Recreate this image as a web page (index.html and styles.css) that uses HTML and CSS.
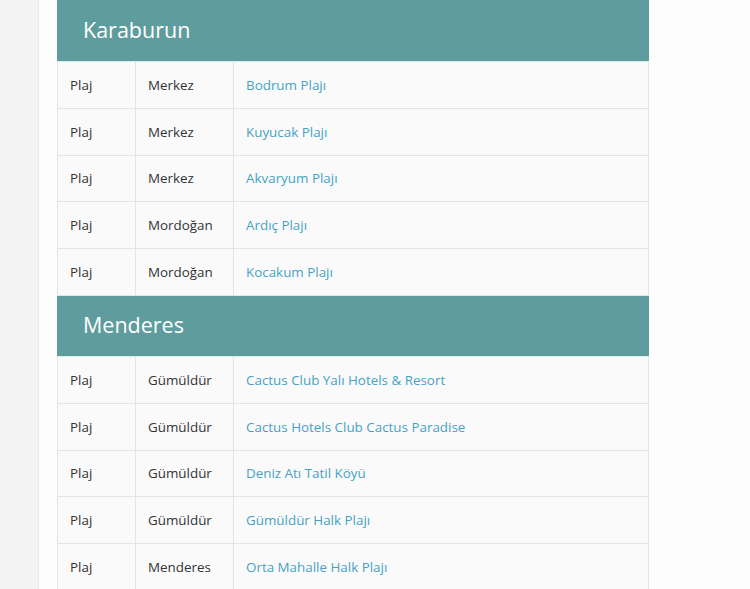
FILE: index.html
```html
<!DOCTYPE html>
<html lang="tr">
<head>
<meta charset="utf-8">
<title>Plajlar</title>
<link rel="stylesheet" href="styles.css">
</head>
<body>
<div class="page">
  <div class="gutter"></div>
  <main class="panel">
    <table class="list">
      <colgroup>
        <col class="col-type">
        <col class="col-area">
        <col class="col-name">
      </colgroup>
      <tbody>
        <tr class="group"><th colspan="3">Karaburun</th></tr>
        <tr><td>Plaj</td><td>Merkez</td><td><a href="#">Bodrum Plajı</a></td></tr>
        <tr><td>Plaj</td><td>Merkez</td><td><a href="#">Kuyucak Plajı</a></td></tr>
        <tr><td>Plaj</td><td>Merkez</td><td><a href="#">Akvaryum Plajı</a></td></tr>
        <tr><td>Plaj</td><td>Mordoğan</td><td><a href="#">Ardıç Plajı</a></td></tr>
        <tr><td>Plaj</td><td>Mordoğan</td><td><a href="#">Kocakum Plajı</a></td></tr>
        <tr class="group"><th colspan="3">Menderes</th></tr>
        <tr><td>Plaj</td><td>Gümüldür</td><td><a href="#">Cactus Club Yalı Hotels &amp; Resort</a></td></tr>
        <tr><td>Plaj</td><td>Gümüldür</td><td><a href="#">Cactus Hotels Club Cactus Paradise</a></td></tr>
        <tr><td>Plaj</td><td>Gümüldür</td><td><a href="#">Deniz Atı Tatil Köyü</a></td></tr>
        <tr><td>Plaj</td><td>Gümüldür</td><td><a href="#">Gümüldür Halk Plajı</a></td></tr>
        <tr><td>Plaj</td><td>Menderes</td><td><a href="#">Orta Mahalle Halk Plajı</a></td></tr>
      </tbody>
    </table>
  </main>
</div>
</body>
</html>
```

FILE: styles.css
```css
html, body {
  margin: 0;
  padding: 0;
  background: #f4f4f4;
  font-family: "Open Sans", "Noto Sans", "Liberation Sans", sans-serif;
  overflow: hidden;
}

.page {
  display: flex;
  min-height: 589px;
}

.gutter {
  width: 38px;
  flex: none;
  border-right: 1px solid #ececec;
}

.panel {
  flex: 1;
  background: #fdfdfd;
  padding-left: 18px;
}

.list {
  width: 592px;
  border-collapse: collapse;
  table-layout: fixed;
  background: #fbfafa;
}

.col-type { width: 78px; }
.col-area { width: 98px; }

.list th {
  background: #5f9c9e;
  color: #ffffff;
  font-weight: 400;
  font-size: 21.5px;
  text-align: left;
  height: 61px;
  padding: 0 0 3px 25px;
  box-sizing: border-box;
  border: 1px solid #5f9c9e;
  border-bottom: 1px solid #d9ecec;
}

.list td {
  height: 45.8px;
  border: 1px solid #e4e4e4;
  padding: 0 0 0 12px;
  font-size: 13.4px;
  color: #333333;
  white-space: nowrap;
}

.list a {
  color: #45a2c6;
  text-decoration: none;
}
```
